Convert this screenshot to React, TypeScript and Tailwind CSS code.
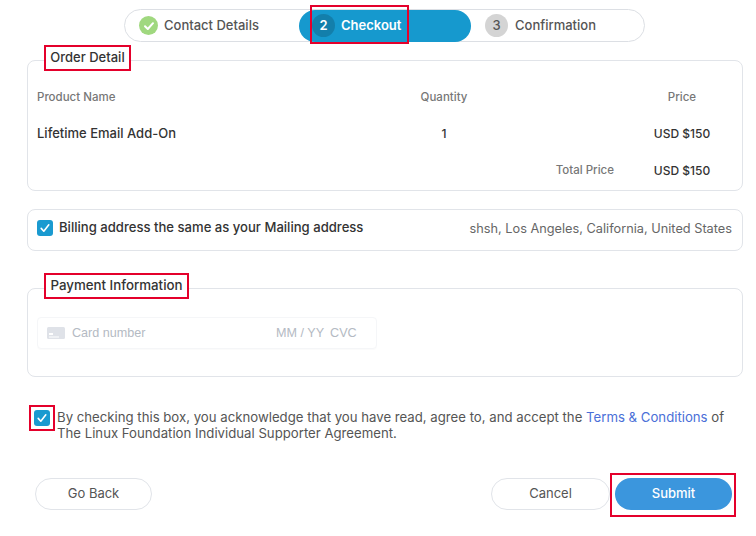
import React from 'react';

const font = { fontFamily: '"Inter", "Liberation Sans", sans-serif' };

const CheckBox: React.FC = () => (
  <span className="flex h-4 w-4 shrink-0 items-center justify-center rounded-[3px] bg-[#1a9ad0]">
    <svg width="12" height="12" viewBox="0 0 12 12" fill="none">
      <path d="M2.2 6.4 L4.8 9.2 L9.8 2.8" stroke="#fff" strokeWidth="1.6" strokeLinecap="round" strokeLinejoin="round" />
    </svg>
  </span>
);

const Legend: React.FC<{ children: React.ReactNode; width: string }> = ({ children, width }) => (
  <div className={`absolute left-[16px] top-[-16px] flex h-[26px] items-center justify-center border-2 border-[#e4002b] bg-white font-medium text-[#333] ${width}`}>
    {children}
  </div>
);

export default function App() {
  return (
    <div className="h-[536px] w-[756px] overflow-hidden bg-white text-[#444]" style={font}>
      {/* Stepper */}
      <div className="pl-[124px] pt-[9px]">
        <div className="relative flex h-[33px] w-[521px] items-center rounded-full border border-[#dcdfe4] bg-white">
          <div className="flex w-[174px] items-center pl-[14px]">
            <span className="flex h-[19px] w-[19px] items-center justify-center rounded-full bg-[#a0d87f]">
              <svg width="12" height="12" viewBox="0 0 12 12" fill="none">
                <path d="M2 6.2 L4.8 9 L10 3.2" stroke="#fff" strokeWidth="2" strokeLinecap="round" strokeLinejoin="round" />
              </svg>
            </span>
            <span className="ml-[6px] text-[13px] font-medium text-[#555]">Contact Details</span>
          </div>
          <div className="flex h-[32px] w-[172px] items-center rounded-full bg-[#1699ce] pl-[13px]">
            <span className="flex h-[23px] w-[23px] items-center justify-center rounded-full bg-[#137fab] text-[13px] font-semibold text-white">2</span>
            <span className="ml-[6px] text-[13px] font-semibold text-white">Checkout</span>
          </div>
          <div className="flex items-center pl-[14px]">
            <span className="flex h-[23px] w-[23px] items-center justify-center rounded-full bg-[#d4d4d4] text-[13px] font-medium text-[#555]">3</span>
            <span className="ml-[7px] text-[13px] font-medium text-[#555]">Confirmation</span>
          </div>
          {/* annotation */}
          <div className="absolute left-[185px] top-[-5px] h-[39px] w-[99px] border-2 border-[#e4002b]" />
        </div>
      </div>

      <div className="w-[743px] pl-[27px]">
        {/* Order detail */}
        <div className="relative mt-[18px] h-[131px] rounded-lg border border-[#e1e4e9] pl-[9px] pt-[18px]">
          <Legend width="w-[87px] text-[13px]">Order Detail</Legend>
          <div className="grid grid-cols-[357px_100px_138px_100px] grid-rows-[36px_37px_36px] items-center">
            <span className="pt-[1px] text-[11.5px] font-medium text-[#777]">Product Name</span>
            <span className="pt-[1px] text-center text-[11.5px] font-medium text-[#777]">Quantity</span>
            <span />
            <span className="pt-[1px] text-center text-[11.5px] font-medium text-[#777]">Price</span>
            <span className="text-[13px] font-medium text-[#333]">Lifetime Email Add-On</span>
            <span className="text-center text-[12px] font-medium text-[#333]">1</span>
            <span />
            <span className="text-center text-[12px] font-medium text-[#333]">USD $150</span>
            <span />
            <span />
            <span className="pr-[18px] pt-[1px] text-right text-[11.5px] font-medium text-[#777]">Total Price</span>
            <span className="pt-[1px] text-center text-[12px] font-medium text-[#333]">USD $150</span>
          </div>
        </div>

        {/* Billing */}
        <div className="mt-[18px] flex h-[42px] items-center justify-between rounded-lg border border-[#e1e4e9] pl-[9px] pr-[10px]">
          <div className="flex items-center gap-[6px] pb-[4px]">
            <CheckBox />
            <span className="text-[13.1px] font-medium text-[#333]">Billing address the same as your Mailing address</span>
          </div>
          <span className="pb-[3px] text-[12.75px] text-[#666]">shsh, Los Angeles, California, United States</span>
        </div>

        {/* Payment */}
        <div className="relative mt-[37px] h-[89px] rounded-lg border border-[#e1e4e9] pl-[9px] pt-[28px]">
          <Legend width="w-[145px] text-[13.3px]">Payment Information</Legend>
          <div className="flex h-[32px] w-[340px] items-center rounded border border-[#f5f6f8] pl-[9px] shadow-[0_1px_1px_rgba(0,0,0,0.02)]" style={{ fontFamily: '"Liberation Sans", sans-serif' }}>
            <svg width="18" height="12" viewBox="0 0 18 12" fill="none">
              <rect width="18" height="12" rx="1.5" fill="#dfe2e8" />
              <rect x="2" y="6" width="4" height="2" fill="#fff" />
              <rect x="2" y="9.5" width="10" height="1" fill="#fff" />
            </svg>
            <span className="ml-[7px] w-[204px] text-[12.6px] text-[#b4bac3]">Card number</span>
            <span className="text-[12.6px] text-[#b4bac3]">MM / YY</span>
            <span className="ml-[6px] text-[12.6px] text-[#b4bac3]">CVC</span>
          </div>
        </div>
      </div>

      {/* Agreement */}
      <div className="mt-[28px] flex pl-[29px]">
        <div className="flex h-[26px] w-[26px] shrink-0 items-center justify-center border-2 border-[#e4002b]">
          <CheckBox />
        </div>
        <p className="ml-[2px] mt-[4px] w-[680px] text-[13.2px] leading-[16px] text-[#555]">
          By checking this box, you acknowledge that you have read, agree to, and accept the{' '}
          <span className="text-[#4a6fd8]">Terms &amp; Conditions</span> of The Linux Foundation Individual Supporter Agreement.
        </p>
      </div>

      {/* Actions */}
      <div className="mt-[32px] flex w-[736px] items-start justify-between pl-[35px]">
        <button className="mt-[5px] h-8 w-[117px] rounded-full border border-[#e1e4e9] text-[13px] text-[#555]">Go Back</button>
        <div className="flex items-start">
          <button className="mt-[5px] h-8 w-[119px] rounded-full border border-[#e1e4e9] text-[13px] text-[#555]">Cancel</button>
          <div className="h-[44px] w-[126px] border-2 border-[#e4002b] pl-[3px] pt-[3px]">
            <button className="h-8 w-[117px] rounded-full bg-[#3b96dd] text-[13px] font-medium text-white">Submit</button>
          </div>
        </div>
      </div>
    </div>
  );
}
